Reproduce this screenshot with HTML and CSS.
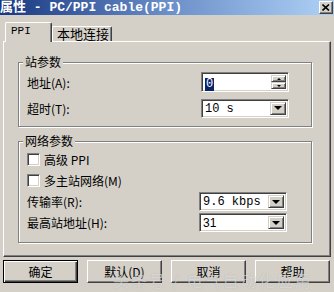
FILE: index.html
```html
<!DOCTYPE html>
<html lang="zh">
<head>
    <meta charset="UTF-8">
    <title>属性 - PC/PPI cable(PPI)</title>
    <link rel="stylesheet" href="styles.css">
</head>
<body>
<div class="window">
    <div class="titlebar">
        <span class="title">属性 - PC/PPI cable(PPI)</span>
        <span class="close-btn">
            <svg width="8" height="7" viewBox="0 0 8 7"><path d="M0.5 0.5 L7 6.5 M7 0.5 L0.5 6.5" stroke="#000" stroke-width="1.6" fill="none"/></svg>
        </span>
    </div>

    <div class="tabs">
        <div class="tab active">PPI</div>
        <div class="tab">本地连接</div>
    </div>

    <div class="panel">
        <div class="group group-station">
            <div class="group-title">站参数</div>
            <div class="row">
                <label>地址(A):</label>
                <div class="spin">
                    <div class="spin-value"><span class="selected">0</span></div>
                    <div class="spin-buttons">
                        <span class="spin-btn"><i class="arrow-up"></i></span>
                        <span class="spin-btn"><i class="arrow-down small"></i></span>
                    </div>
                </div>
            </div>
            <div class="row">
                <label>超时(T):</label>
                <div class="combo">
                    <div class="combo-value mono">10 s</div>
                    <span class="combo-btn"><i class="arrow-down"></i></span>
                </div>
            </div>
        </div>

        <div class="group group-net">
            <div class="group-title">网络参数</div>
            <div class="row check-row">
                <span class="checkbox"></span>
                <label>高级 PPI</label>
            </div>
            <div class="row check-row">
                <span class="checkbox"></span>
                <label>多主站网络(M)</label>
            </div>
            <div class="row">
                <label>传输率(R):</label>
                <div class="combo">
                    <div class="combo-value mono">9.6 kbps</div>
                    <span class="combo-btn"><i class="arrow-down"></i></span>
                </div>
            </div>
            <div class="row">
                <label>最高站地址(H):</label>
                <div class="combo">
                    <div class="combo-value">31</div>
                    <span class="combo-btn"><i class="arrow-down"></i></span>
                </div>
            </div>
        </div>
    </div>

    <div class="buttons">
        <span class="btn default">确定</span>
        <span class="btn">默认(D)</span>
        <span class="btn">取消</span>
        <span class="btn">帮助</span>
    </div>

    <div class="watermark">头条号 / 电气自动化应用</div>
</div>
</body>
</html>
```

FILE: styles.css
```css
:root {
    --face: #d4d0c8;
    --shadow: #808080;
    --dark: #404040;
    --light: #ffffff;
    --select: #0a246a;
}

body {
    margin: 0;
    background: var(--face);
    font-family: "Noto Sans CJK SC", sans-serif;
    font-size: 12px;
    color: #000;
}

.window {
    position: relative;
    width: 334px;
    height: 292px;
    overflow: hidden;
}

.titlebar {
    height: 15px;
    display: flex;
    justify-content: space-between;
    align-items: flex-start;
    background: linear-gradient(90deg, #183780 0%, #6a8ec8 50%, #a8cbf2 95%);
}

.title {
    font-family: "Liberation Mono", "Noto Sans CJK SC", monospace;
    font-weight: bold;
    font-size: 13px;
    line-height: 15px;
    color: #fff;
    white-space: pre;
}

.close-btn {
    box-sizing: border-box;
    width: 14px;
    height: 13px;
    margin: 1px 1px 0 0;
    background: var(--face);
    border: 1px solid;
    border-color: var(--light) var(--dark) var(--dark) var(--light);
    box-shadow: inset -1px -1px var(--shadow);
    display: flex;
    align-items: center;
    justify-content: center;
}

/* вкладки */
.tabs {
    display: flex;
    align-items: flex-end;
    height: 19px;
    margin: 7px 0 0 5px;
}

.tab {
    box-sizing: border-box;
    height: 15px;
    width: 60px;
    background: var(--face);
    border-top: 1px solid var(--light);
    border-left: 1px solid var(--light);
    border-right: 1px solid var(--dark);
    border-radius: 2px 2px 0 0;
    box-shadow: inset -1px 0 var(--shadow);
    padding-left: 4px;
    line-height: 14px;
    font-size: 13px;
}

.tab.active {
    position: relative;
    z-index: 1;
    width: 47px;
    height: 20px;
    margin-bottom: -1px;
    padding-left: 5px;
    line-height: 17px;
    font-family: "Liberation Mono", monospace;
    font-size: 11px;
}

.panel {
    box-sizing: border-box;
    width: 328px;
    margin-left: 3px;
    padding: 0 0 13px 0;
    border-top: 1px solid var(--light);
    border-left: 1px solid var(--light);
    border-right: 1px solid var(--dark);
    border-bottom: 1px solid var(--dark);
    box-shadow: inset -1px -1px var(--shadow);
}

/* группы */
.group {
    border: 1px solid var(--shadow);
    box-shadow: inset 1px 1px var(--light), 1px 1px var(--light);
    margin: 0 18px 0 14px;
}

.group-station {
    margin-top: 20px;
    padding: 0 22px 7px 8px;
}

.group-net {
    margin-top: 14px;
    padding: 0 24px 9px 8px;
}

.group-title {
    width: max-content;
    margin: -8px 0 0 -4px;
    padding: 0 2px;
    line-height: 14px;
    background: var(--face);
}

.row {
    display: flex;
    align-items: center;
    justify-content: space-between;
}

.group-station .row {
    height: 22px;
}

.group-station .row:nth-child(2) {
    margin-top: 2px;
}

.group-station .row + .row {
    margin-top: 4px;
}

.group-net .row {
    height: 21px;
}

.group-net .row:nth-child(2) {
    margin-top: 1px;
}

.check-row {
    justify-content: flex-start;
    gap: 4px;
}

.checkbox {
    box-sizing: border-box;
    width: 13px;
    height: 13px;
    background: #fff;
    border: 1px solid;
    border-color: var(--shadow) var(--light) var(--light) var(--shadow);
    box-shadow: inset 1px 1px var(--dark), inset -1px -1px var(--face);
}

/* поля ввода */
.spin,
.combo {
    box-sizing: border-box;
    width: 88px;
    display: flex;
    background: #fff;
    border: 1px solid;
    border-color: var(--shadow) var(--light) var(--light) var(--shadow);
    box-shadow: inset 1px 1px var(--dark), inset -1px -1px var(--face);
    padding: 2px;
}

.spin {
    height: 20px;
}

.combo {
    height: 19px;
}

.spin-value,
.combo-value {
    flex: 1;
    padding-left: 1px;
    line-height: 14px;
    font-size: 12px;
}

.combo-value {
    font-family: "Liberation Sans", sans-serif;
}

.combo-value.mono {
    font-family: "Liberation Mono", monospace;
}

.selected {
    display: inline-block;
    background: var(--select);
    color: #fff;
    font-family: "Liberation Mono", monospace;
    line-height: 13px;
    padding: 0 1px;
}

.spin-buttons {
    width: 15px;
    display: flex;
    flex-direction: column;
}

.spin-btn,
.combo-btn {
    box-sizing: border-box;
    background: var(--face);
    border: 1px solid;
    border-color: var(--face) var(--dark) var(--dark) var(--face);
    box-shadow: inset 1px 1px var(--light), inset -1px -1px var(--shadow);
    display: flex;
    align-items: center;
    justify-content: center;
}

.spin-btn {
    flex: 1;
}

.combo-btn {
    width: 16px;
}

.arrow-down,
.arrow-up {
    width: 0;
    height: 0;
    border-left: 4px solid transparent;
    border-right: 4px solid transparent;
}

.arrow-down {
    border-top: 4px solid #000;
}

.arrow-up {
    border-left-width: 2px;
    border-right-width: 2px;
    border-bottom: 2px solid #000;
}

.arrow-down.small {
    border-left-width: 2px;
    border-right-width: 2px;
    border-top-width: 2px;
}

/* кнопки */
.buttons {
    display: flex;
    justify-content: space-between;
    margin: 3px 4px 0 3px;
}

.btn {
    box-sizing: border-box;
    width: 75px;
    height: 23px;
    display: flex;
    align-items: center;
    justify-content: center;
    background: var(--face);
    border: 1px solid;
    border-color: var(--light) var(--dark) var(--dark) var(--light);
    box-shadow: inset -1px -1px var(--shadow);
}

.btn.default {
    border-color: #000;
    box-shadow: inset 1px 1px var(--light), inset -1px -1px var(--dark), inset -2px -2px var(--shadow);
}

.watermark {
    position: absolute;
    left: 113px;
    top: 268px;
    font-size: 16px;
    letter-spacing: 2px;
    color: rgba(255, 255, 255, 0.5);
    text-shadow: 0 0 1px rgba(90, 90, 90, 0.35);
    white-space: nowrap;
}
```
